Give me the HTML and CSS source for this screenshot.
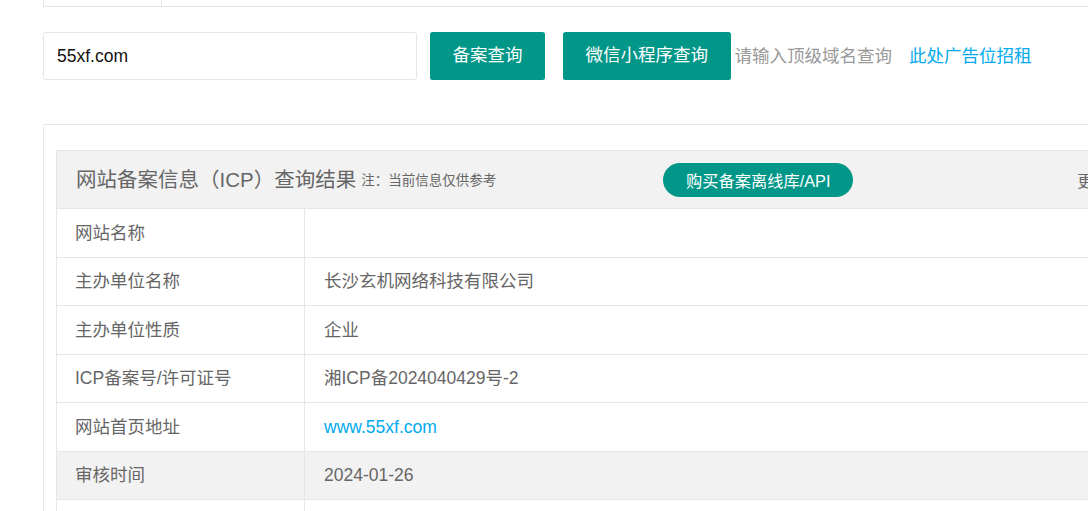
FILE: index.html
```html
<!DOCTYPE html>
<html lang="zh-CN">
<head>
<meta charset="utf-8">
<title>ICP备案查询</title>
<link rel="stylesheet" href="styles.css">
</head>
<body>
<div class="page">
  <div class="tabs">
    <div class="tab"></div>
    <div class="tab-rest"></div>
  </div>

  <form class="search">
    <input class="search-input" type="text" value="55xf.com">
    <button class="btn btn-first" type="button">备案查询</button>
    <button class="btn btn-second" type="button">微信小程序查询</button>
    <span class="hint">请输入顶级域名查询</span>
    <a class="ad" href="#">此处广告位招租</a>
  </form>

  <div class="card">
    <div class="result">
      <div class="result-head">
        <span class="title">网站备案信息（ICP）查询结果</span>
        <span class="note">注：当前信息仅供参考</span>
        <a class="pill" href="#">购买备案离线库/API</a>
        <span class="more">更新缓存</span>
      </div>
      <div class="row"><div class="label">网站名称</div><div class="value"></div></div>
      <div class="row"><div class="label">主办单位名称</div><div class="value">长沙玄机网络科技有限公司</div></div>
      <div class="row"><div class="label">主办单位性质</div><div class="value">企业</div></div>
      <div class="row"><div class="label">ICP备案号/许可证号</div><div class="value">湘ICP备2024040429号-2</div></div>
      <div class="row"><div class="label">网站首页地址</div><div class="value"><a class="link" href="#">www.55xf.com</a></div></div>
      <div class="row row-hover"><div class="label">审核时间</div><div class="value">2024-01-26</div></div>
      <div class="row"><div class="label"></div><div class="value"></div></div>
    </div>
  </div>
</div>
</body>
</html>
```

FILE: styles.css
```css
html, body {
  margin: 0;
  padding: 0;
  overflow: hidden;
  background: #fff;
}

body {
  font-family: "Liberation Sans", "Noto Sans CJK SC", sans-serif;
  font-size: 17.5px;
  color: #666;
}

.page {
  padding-left: 43px;
  width: 1300px;
}

.tabs {
  display: flex;
  height: 6px;
  border-left: 1px solid #e6e6e6;
  border-bottom: 1px solid #e6e6e6;
}

.tab {
  width: 117px;
  height: 7px;
  border-right: 1px solid #e6e6e6;
}

.tab-rest {
  flex: 1;
}

.search {
  display: flex;
  align-items: center;
  margin: 25px 0 0 0;
  height: 47.5px;
}

.search-input {
  box-sizing: border-box;
  width: 374px;
  height: 47.5px;
  margin: 0;
  padding: 1px 12px 0 13px;
  border: 1px solid #e6e6e6;
  border-radius: 2.5px;
  font-family: "Liberation Sans", "Noto Sans CJK SC", sans-serif;
  font-size: 17.5px;
  color: #111;
  outline: none;
}

.btn {
  box-sizing: border-box;
  height: 47.5px;
  padding: 0 22.5px;
  border: none;
  border-radius: 2.5px;
  background: #009688;
  color: #fff;
  font-family: "Liberation Sans", "Noto Sans CJK SC", sans-serif;
  font-size: 17.5px;
  line-height: 47.5px;
  cursor: pointer;
}

.btn-first {
  margin-left: 13px;
}

.btn-second {
  margin-left: 18px;
}

.hint {
  margin-left: 4px;
  color: #999;
  line-height: 24px;
}

.ad {
  margin-left: 17px;
  color: #01aaed;
  text-decoration: none;
  line-height: 24px;
}

.card {
  margin-top: 44.5px;
  border: 1px solid #e6e6e6;
  border-radius: 2px;
  padding: 25px 12px;
  width: 1200px;
}

.result {
  border-left: 1px solid #e6e6e6;
  border-bottom: 1px solid #e6e6e6;
}

.result-head {
  box-sizing: border-box;
  display: flex;
  align-items: center;
  height: 58px;
  padding-left: 19px;
  border-top: 1px solid #e6e6e6;
  background: #f2f2f2;
}

.title {
  font-size: 20.5px;
  color: #666;
  line-height: 28px;
}

.note {
  margin-left: 5px;
  font-size: 13.5px;
  color: #666;
  line-height: 20px;
  padding-top: 2px;
}

.pill {
  box-sizing: border-box;
  display: flex;
  align-items: center;
  justify-content: center;
  width: 190px;
  height: 34px;
  margin-left: 167px;
  border-radius: 17px;
  background: #009688;
  color: #fff;
  font-size: 16.25px;
  text-decoration: none;
}

.more {
  margin-left: 224px;
  font-size: 16.25px;
  color: #666;
}

.row {
  box-sizing: border-box;
  display: flex;
  height: 48.5px;
  border-top: 1px solid #e6e6e6;
}

.row-hover {
  background: #f2f2f2;
}

.label {
  box-sizing: border-box;
  width: 248px;
  padding-left: 18px;
  display: flex;
  align-items: center;
  border-right: 1px solid #e6e6e6;
  line-height: 22px;
}

.value {
  flex: 1;
  padding-left: 19px;
  display: flex;
  align-items: center;
  line-height: 22px;
}

.link {
  color: #01aaed;
  text-decoration: none;
}
```
